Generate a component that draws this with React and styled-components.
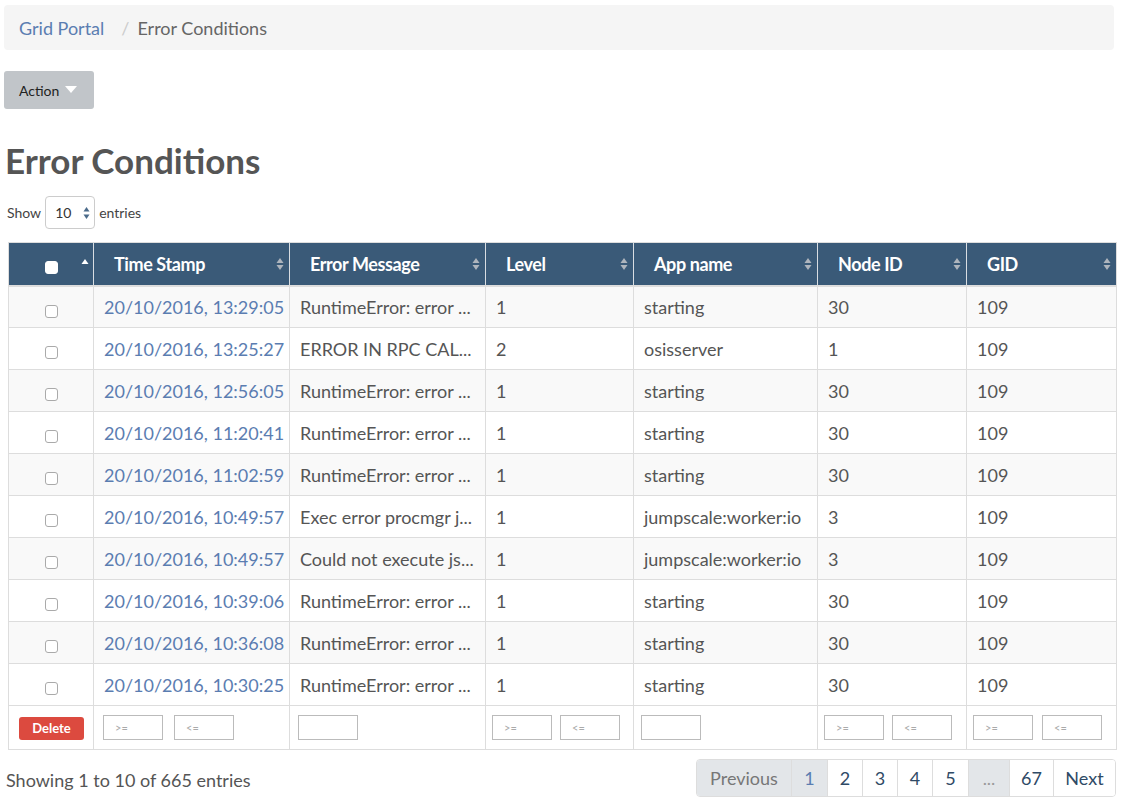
import React from "react";
import styled, { createGlobalStyle } from "styled-components";

const GlobalStyle = createGlobalStyle`
  body {
    margin: 0;
    background: #fff;
    font-family: Lato, "Open Sans", "Liberation Sans", sans-serif;
    color: #555;
  }
`;

const Page = styled.div`
  width: 1112px;
  padding: 5px 0 0 4px;
`;

const Breadcrumb = styled.div`
  display: flex;
  align-items: center;
  height: 45px;
  width: 1110px;
  box-sizing: border-box;
  padding: 0 15px;
  background: #f5f5f5;
  border-radius: 4px;
  font-size: 18px;
`;

const Crumb = styled.span`
  color: ${(p) => (p.$link ? "#5b7db1" : "#666")};
`;

const Slash = styled.span`
  color: #ccc;
  padding: 0 8px 0 17px;
`;

const ActionButton = styled.button`
  display: flex;
  align-items: center;
  gap: 6px;
  margin-top: 21px;
  height: 38px;
  width: 90px;
  padding: 0 0 0 15px;
  border: none;
  border-radius: 3px;
  background: #c1c5c9;
  color: #222;
  font-family: inherit;
  font-size: 14px;
`;

const Title = styled.h1`
  margin: 30px 0 0 1px;
  font-size: 35px;
  font-weight: 700;
  color: #555;
  line-height: 42px;
`;

const ShowRow = styled.div`
  display: flex;
  align-items: center;
  gap: 4px;
  margin-top: 15px;
  margin-left: 3px;
  font-size: 14px;
  color: #444;
`;

const FakeSelect = styled.div`
  display: flex;
  align-items: center;
  justify-content: space-between;
  width: 50px;
  height: 33px;
  box-sizing: border-box;
  padding: 0 4px 0 9px;
  border: 1px solid #ccc;
  border-radius: 4px;
  font-size: 14px;
  color: #333;
`;

const TableWrap = styled.div`
  margin: 13px 0 0 4px;
`;

const Table = styled.table`
  width: 1108px;
  table-layout: fixed;
  border-collapse: collapse;
  border: 1px solid #ddd;
  font-size: 18px;
`;

const Th = styled.th`
  position: relative;
  height: 43px;
  box-sizing: border-box;
  padding: 0 20px;
  background: #3a5a78;
  color: #fff;
  text-align: left;
  font-weight: 700;
  letter-spacing: -0.4px;
  border-left: 1px solid #d8dde2;
  border-bottom: 2px solid #ddd;
  &:first-child {
    border-left: none;
    text-align: center;
  }
`;

const SortIcon = styled.span`
  position: absolute;
  right: 5px;
  top: 50%;
  transform: translateY(-50%);
  display: flex;
`;

const Tr = styled.tr`
  background: ${(p) => (p.$odd ? "#f9f9f9" : "#fff")};
`;

const Td = styled.td`
  height: 42px;
  box-sizing: border-box;
  padding: 0 10px;
  border: 1px solid #ddd;
  white-space: nowrap;
  overflow: hidden;
  color: ${(p) => (p.$link ? "#5b7db1" : "#555")};
  text-align: ${(p) => (p.$center ? "center" : "left")};
`;

const FootTd = styled(Td)`
  height: 44px;
  padding: 0 0 0 ${(p) => p.$pad || 6}px;
`;

const Check = styled.span`
  display: inline-block;
  width: 13px;
  height: 13px;
  box-sizing: border-box;
  border: 1px solid ${(p) => (p.$head ? "#fff" : "#aaa")};
  border-radius: 3px;
  background: #fff;
  vertical-align: middle;
  margin-top: ${(p) => (p.$head ? "2px" : "4px")};
`;

const DeleteButton = styled.button`
  height: 23px;
  width: 65px;
  border: none;
  border-radius: 3px;
  background: #dc4a3f;
  color: #fff;
  font-family: inherit;
  font-weight: 700;
  font-size: 13px;
  padding: 0;
  margin-left: 4px;
`;

const FilterGroup = styled.div`
  display: flex;
  gap: ${(p) => p.$gap || 8}px;
`;

const Filter = styled.div`
  width: 60px;
  height: 25px;
  box-sizing: border-box;
  border: 1px solid #bbb;
  font-size: 11px;
  line-height: 23px;
  color: #aaa;
  padding-left: 11px;
  background: #fff;
`;

const Bottom = styled.div`
  display: flex;
  justify-content: space-between;
  align-items: center;
  margin: 9px 0 0 2px;
`;

const Info = styled.div`
  font-size: 18px;
  color: #555;
  padding-top: 3px;
`;

const Pager = styled.div`
  display: flex;
  border: 1px solid #ddd;
  border-radius: 4px;
  overflow: hidden;
  height: 38px;
  box-sizing: border-box;
`;

const PageItem = styled.div`
  display: flex;
  align-items: center;
  justify-content: center;
  box-sizing: border-box;
  width: ${(p) => p.$w}px;
  font-size: 18px;
  border-left: 1px solid #ddd;
  background: ${(p) => (p.$gray ? "#e3e6e9" : "#fff")};
  color: ${(p) => p.$color || "#2f4a66"};
  &:first-child {
    border-left: none;
  }
`;

const SortArrows = ({ up = true, down = true, color = "#aeb5bd" }) => (
  <svg width="8" height="14" viewBox="0 0 8 14">
    {up && <path d="M4 1 L7.5 6 L0.5 6 Z" fill={color} />}
    {down && <path d="M4 13 L7.5 8 L0.5 8 Z" fill={color} />}
  </svg>
);

const rows = [
  ["20/10/2016, 13:29:05", "RuntimeError: error ...", "1", "starting", "30", "109"],
  ["20/10/2016, 13:25:27", "ERROR IN RPC CAL...", "2", "osisserver", "1", "109"],
  ["20/10/2016, 12:56:05", "RuntimeError: error ...", "1", "starting", "30", "109"],
  ["20/10/2016, 11:20:41", "RuntimeError: error ...", "1", "starting", "30", "109"],
  ["20/10/2016, 11:02:59", "RuntimeError: error ...", "1", "starting", "30", "109"],
  ["20/10/2016, 10:49:57", "Exec error procmgr j...", "1", "jumpscale:worker:io", "3", "109"],
  ["20/10/2016, 10:49:57", "Could not execute js...", "1", "jumpscale:worker:io", "3", "109"],
  ["20/10/2016, 10:39:06", "RuntimeError: error ...", "1", "starting", "30", "109"],
  ["20/10/2016, 10:36:08", "RuntimeError: error ...", "1", "starting", "30", "109"],
  ["20/10/2016, 10:30:25", "RuntimeError: error ...", "1", "starting", "30", "109"],
];

const columns = [
  { title: "Time Stamp", width: 196 },
  { title: "Error Message", width: 196 },
  { title: "Level", width: 148 },
  { title: "App name", width: 184 },
  { title: "Node ID", width: 149 },
  { title: "GID", width: 150 },
];

const RangeFilter = ({ gap }) => (
  <FilterGroup $gap={gap}>
    <Filter>&gt;=</Filter>
    <Filter>&lt;=</Filter>
  </FilterGroup>
);

const pages = [
  { label: "Previous", w: 94, gray: true, color: "#777" },
  { label: "1", w: 36, gray: true, color: "#5b7db1" },
  { label: "2", w: 35 },
  { label: "3", w: 35 },
  { label: "4", w: 35 },
  { label: "5", w: 36 },
  { label: "...", w: 41, gray: true, color: "#999" },
  { label: "67", w: 44 },
  { label: "Next", w: 62 },
];

const App = () => {
  return (
    <>
      <GlobalStyle />
      <Page>
        <Breadcrumb>
          <Crumb $link>Grid Portal</Crumb>
          <Slash>/</Slash>
          <Crumb>Error Conditions</Crumb>
        </Breadcrumb>

        <ActionButton>
          Action
          <svg width="12" height="8" viewBox="0 0 12 8">
            <path d="M0 0 L12 0 L6 7 Z" fill="#fff" />
          </svg>
        </ActionButton>

        <Title>Error Conditions</Title>

        <ShowRow>
          Show
          <FakeSelect>
            10
            <svg width="7" height="14" viewBox="0 0 7 14">
              <path d="M3.5 1 L6.5 5.5 L0.5 5.5 Z" fill="#4a6a8a" />
              <path d="M3.5 13 L6.5 8.5 L0.5 8.5 Z" fill="#4a6a8a" />
            </svg>
          </FakeSelect>
          entries
        </ShowRow>

        <TableWrap>
          <Table>
            <colgroup>
              <col style={{ width: 85 }} />
              {columns.map((c) => (
                <col key={c.title} style={{ width: c.width }} />
              ))}
            </colgroup>
            <thead>
              <tr>
                <Th>
                  <Check $head />
                  <SortIcon style={{ right: 4, top: 15, transform: "none" }}>
                    <SortArrows down={false} color="#fff" />
                  </SortIcon>
                </Th>
                {columns.map((c) => (
                  <Th key={c.title}>
                    {c.title}
                    <SortIcon>
                      <SortArrows />
                    </SortIcon>
                  </Th>
                ))}
              </tr>
            </thead>
            <tbody>
              {rows.map((r, i) => (
                <Tr key={i} $odd={i % 2 === 0}>
                  <Td $center>
                    <Check />
                  </Td>
                  <Td $link>{r[0]}</Td>
                  <Td>{r[1]}</Td>
                  <Td>{r[2]}</Td>
                  <Td>{r[3]}</Td>
                  <Td>{r[4]}</Td>
                  <Td>{r[5]}</Td>
                </Tr>
              ))}
              <Tr>
                <FootTd $pad={6}>
                  <DeleteButton>Delete</DeleteButton>
                </FootTd>
                <FootTd $pad={9}>
                  <RangeFilter gap={11} />
                </FootTd>
                <FootTd $pad={8}>
                  <FilterGroup>
                    <Filter />
                  </FilterGroup>
                </FootTd>
                <FootTd $pad={6}>
                  <RangeFilter gap={8} />
                </FootTd>
                <FootTd $pad={7}>
                  <FilterGroup>
                    <Filter />
                  </FilterGroup>
                </FootTd>
                <FootTd $pad={6}>
                  <RangeFilter gap={8} />
                </FootTd>
                <FootTd $pad={6}>
                  <RangeFilter gap={9} />
                </FootTd>
              </Tr>
            </tbody>
          </Table>
        </TableWrap>

        <Bottom>
          <Info>Showing 1 to 10 of 665 entries</Info>
          <Pager>
            {pages.map((p) => (
              <PageItem key={p.label} $w={p.w} $gray={p.gray} $color={p.color}>
                {p.label}
              </PageItem>
            ))}
          </Pager>
        </Bottom>
      </Page>
    </>
  );
};

export default App;
